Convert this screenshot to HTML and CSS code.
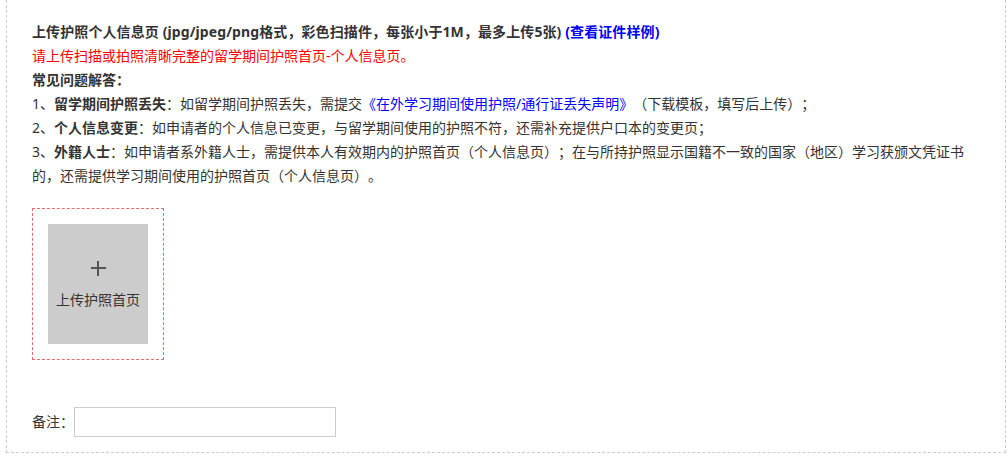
FILE: index.html
```html
<!DOCTYPE html>
<html lang="zh-CN">
<head>
<meta charset="utf-8">
<title>上传护照个人信息页</title>
<link rel="stylesheet" href="styles.css">
</head>
<body>
<div class="panel">
  <div class="info">
    <p class="title">上传护照个人信息页 (jpg/jpeg/png格式，彩色扫描件，每张小于1M，最多上传5张) <a class="sample" href="#">(查看证件样例)</a></p>
    <p class="warn">请上传扫描或拍照清晰完整的留学期间护照首页-个人信息页。</p>
    <p class="faq-title">常见问题解答：</p>
    <p>1、<b>留学期间护照丢失</b>：如留学期间护照丢失，需提交<a class="doc" href="#">《在外学习期间使用护照/通行证丢失声明》</a>（下载模板，填写后上传）；</p>
    <p>2、<b>个人信息变更</b>：如申请者的个人信息已变更，与留学期间使用的护照不符，还需补充提供户口本的变更页；</p>
    <p>3、<b>外籍人士</b>：如申请者系外籍人士，需提供本人有效期内的护照首页（个人信息页）；在与所持护照显示国籍不一致的国家（地区）学习获颁文凭证书的，还需提供学习期间使用的护照首页（个人信息页）。</p>
  </div>
  <div class="upload">
    <div class="upload-btn">
      <span class="plus"></span>
      <span class="upload-text">上传护照首页</span>
    </div>
  </div>
  <div class="remark">
    <label class="remark-label">备注：</label>
    <input class="remark-input" type="text">
  </div>
</div>
</body>
</html>
```

FILE: styles.css
```css
html, body {
  margin: 0;
  padding: 0;
  background: #fff;
}
body {
  font-family: "Noto Sans", "Noto Sans CJK SC", sans-serif;
  font-size: 14px;
  color: #333;
  text-spacing-trim: space-all;
}
.panel {
  margin: 0 2px 6px 6px;
  border: 1px dashed #ccc;
  border-top: none;
  padding: 20px 25px 15px 25px;
}
.info p {
  margin: 0;
  line-height: 24px;
}
.title, .faq-title {
  font-weight: bold;
}
.title {
  letter-spacing: 0.1px;
}
.info b {
  font-weight: bold;
}
.sample {
  color: #0000ee;
  text-decoration: none;
}
.doc {
  color: #0000ff;
  text-decoration: none;
}
.warn {
  color: #ff0000;
}
.upload {
  margin-top: 20px;
  width: 100px;
  padding: 15px;
  border: 1px dashed #e06c6c;
}
.upload-btn {
  width: 100px;
  height: 120px;
  background: #cccccc;
  display: flex;
  flex-direction: column;
  align-items: center;
  padding-top: 37px;
  box-sizing: border-box;
}
.plus {
  position: relative;
  width: 15px;
  height: 15px;
}
.plus::before, .plus::after {
  content: "";
  position: absolute;
  background: #555;
}
.plus::before {
  left: 0;
  right: 0;
  top: 6px;
  height: 2px;
}
.plus::after {
  top: 0;
  bottom: 0;
  left: 6px;
  width: 2px;
}
.upload-text {
  margin-top: 14px;
  line-height: 20px;
  color: #333;
}
.remark {
  margin-top: 47px;
  display: flex;
  align-items: center;
}
.remark-label {
  line-height: 30px;
}
.remark-input {
  width: 262px;
  height: 30px;
  box-sizing: border-box;
  border: 1px solid #ccc;
  margin: 0;
  padding: 0 4px;
  outline: none;
}
```
